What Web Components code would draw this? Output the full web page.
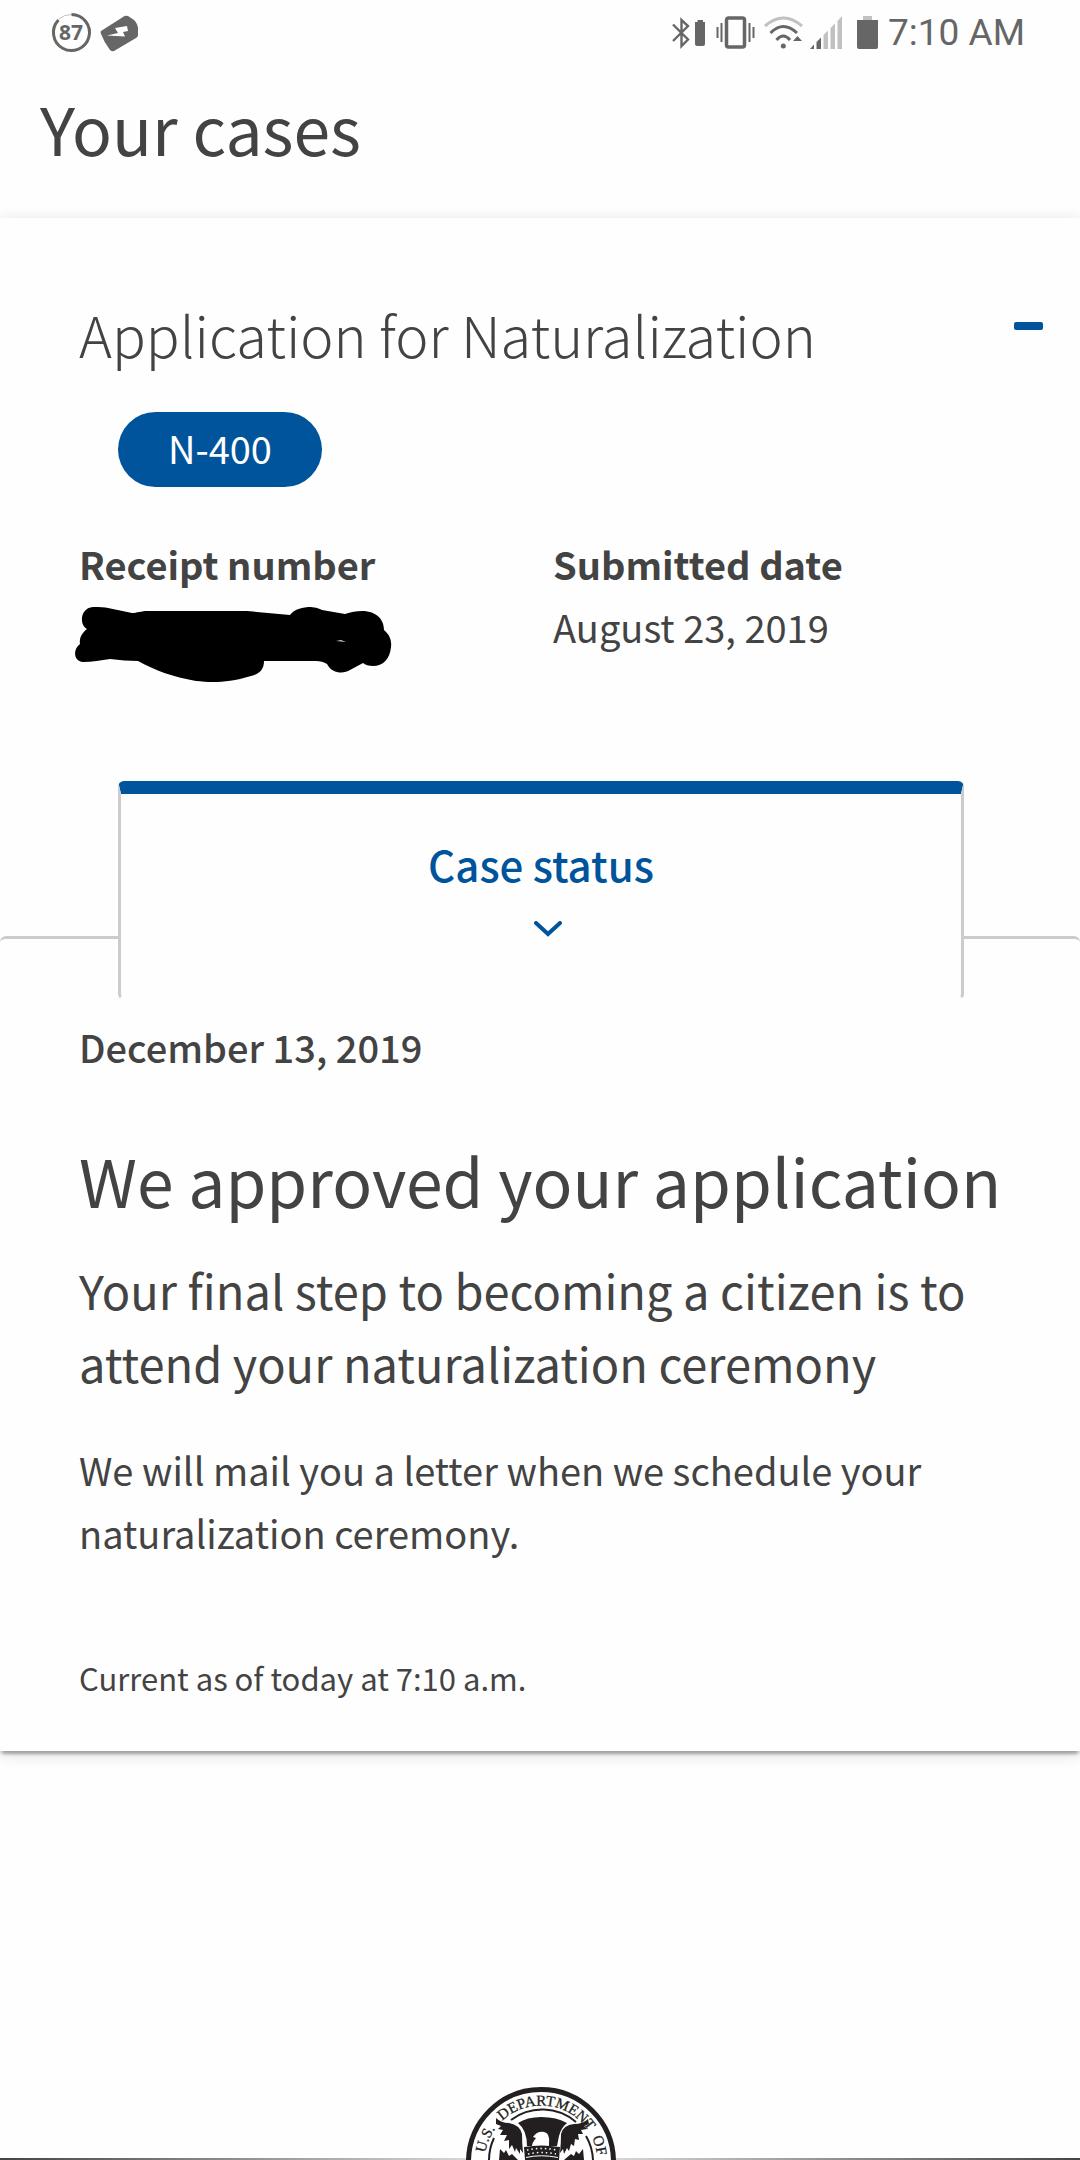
<!DOCTYPE html>
<html lang="en">
<head>
<meta charset="utf-8">
<meta name="viewport" content="width=device-width, initial-scale=1">
<title>Your cases</title>
<style>
    body {
        display: flex;
        flex-direction: column;
        min-height: 100vh;
        margin: 0;
        background: #fefefe;
        color: #434343;
        font-family: "Noto Sans CJK SC", "Noto Sans", sans-serif;
        font-size: 38px;
        line-height: 63px;
        --blue: #00549b;
        --line: #ccc;
        --gutter: 79px;
    }
</style>
</head>
<body>
<status-bar time="7:10 AM" battery="87"></status-bar>
<page-header>Your cases</page-header>
<main>
    <case-card>
        <span slot="title">Application for Naturalization</span>
        <form-badge slot="badge">N-400</form-badge>
        <case-field slot="field" label="Receipt number"><redacted-value></redacted-value></case-field>
        <case-field slot="field" label="Submitted date">August 23, 2019</case-field>
        <case-status>
            <span slot="date">December 13, 2019</span>
            <span slot="heading">We approved your application</span>
            <span slot="subheading">Your final step to becoming a citizen is to attend your naturalization ceremony</span>
            <span slot="body">We will mail you a letter when we schedule your naturalization ceremony.</span>
            <span slot="updated">Current as of today at 7:10 a.m.</span>
        </case-status>
    </case-card>
</main>
<page-footer></page-footer>

<script>
/**
 * Attach an open shadow root holding the given markup.
 */
function render(host, html) {
    const template = document.createElement('template');
    template.innerHTML = html;
    host.attachShadow({ mode: 'open' });
    host.shadowRoot.appendChild(template.content.cloneNode(true));
}

/**
 * Phone status bar: notifications on the left, radios and clock on the right.
 */
class StatusBar extends HTMLElement {
    constructor() {
        super();
        render(this, `
<style>
    :host {
        display: flex;
        justify-content: space-between;
        align-items: center;
        height: 64px;
        padding: 0 55px 0 52px;
        color: #666;
        font: 37px/44px Roboto, sans-serif;
    }
    div {
        display: flex;
        align-items: center;
        gap: 9px;
    }
    time {
        padding-top: 2px;
    }
    svg {
        display: block;
        overflow: visible;
        fill: currentColor;
    }
    .line {
        fill: none;
        stroke: currentColor;
    }
    .dim {
        opacity: .4;
    }
    text {
        font: 700 21px "Open Sans", sans-serif;
    }
</style>
<div>
    <svg width="39" height="39" viewBox="0 0 39 39">
        <path class="line dim" stroke-width="1" d="M7 6A18 18 0 0 1 19.5 1.5"/>
        <path class="line" stroke-width="3" d="M19.5 1.5A18 18 0 1 1 6.5 7"/>
        <text x="19" y="27" text-anchor="middle"></text>
    </svg>
    <svg width="39" height="39" viewBox="0 0 39 39">
        <path d="M1 18L23 4Q25 2 28 3L34 7Q38 11 38 16V22Q38 24 36 25L14 38Q12 39 10 37Q4 29 1 21Q0 19 1 18Z"/>
        <path fill="#fff" d="M15 15L27 13L28 18L23 19L25 23.5L7 22.5L18 20Z"/>
    </svg>
</div>
<div>
    <svg width="35" height="33" viewBox="0 0 35 33">
        <path class="line" stroke-width="2.4" d="M1 8.5L16 23.5L9.5 30V4L16 10L1 25"/>
        <path d="M25.5 4H31V6H33V28Q33 30 31 30H25Q23 30 23 28V6H25.5Z"/>
    </svg>
    <svg width="39" height="33" viewBox="0 0 39 33">
        <rect class="line" x="10.5" y="2" width="18" height="29" rx="2" stroke-width="3.5"/>
        <path class="line" stroke-width="2" d="M1.5 11V22M5.5 7V26M33.5 7V26M37.5 11V22"/>
    </svg>
    <svg width="37" height="33" viewBox="0 0 37 33">
        <g class="line" stroke-width="3">
            <path d="M12.5 24Q19.3 16 26 24"/>
            <path d="M6.5 17Q19.3 4 33 17"/>
            <path class="dim" d="M1 10Q19.3 -6 38 10"/>
        </g>
        <circle cx="19.3" cy="30" r="2.5"/>
        <path d="M29 25L33.5 20L38 25Z"/>
    </svg>
    <svg width="38" height="33" viewBox="0 0 38 33">
        <path d="M0 33L4 28.5V33ZM6.5 26L11 21.5V33H6.5Z"/>
        <path class="dim" d="M13.5 19L18 14.5V33H13.5ZM20.5 12L25 7.5V33H20.5ZM27.5 5L32 0V33H27.5Z"/>
    </svg>
    <svg width="22" height="33" viewBox="0 0 22 33">
        <path class="dim" d="M6 0H15V4H6Z"/>
        <path d="M0 4H21V31Q21 33 19 33H2Q0 33 0 31Z"/>
    </svg>
    <time></time>
</div>
`);
    }

    connectedCallback() {
        this.shadowRoot.querySelector('time').textContent = this.getAttribute('time');
        this.shadowRoot.querySelector('text').textContent = this.getAttribute('battery');
    }
}

class PageHeader extends HTMLElement {
    constructor() {
        super();
        render(this, `
<style>
    :host {
        display: block;
        padding: 15px 40px 43px;
    }
    h1 {
        margin: 0;
        font-size: 66px;
        font-weight: 400;
        line-height: 96px;
    }
</style>
<h1><slot></slot></h1>
`);
    }
}

/**
 * Card for one filed form, can be collapsed with the button at its corner.
 */
class CaseCard extends HTMLElement {
    constructor() {
        super();
        render(this, `
<style>
    :host {
        display: block;
        padding-top: 80px;
        background: #fefefe;
        box-shadow: 0 6px 3px -3px rgba(0,0,0,.2), 0 3px 3px 0 rgba(0,0,0,.14), 0 3px 15px 0 rgba(0,0,0,.14);
    }
    header {
        display: flex;
        justify-content: space-between;
        align-items: flex-start;
        padding: 0 22px 0 var(--gutter);
    }
    h2 {
        margin: 0;
        font-size: 56px;
        font-weight: 300;
        line-height: 72px;
    }
    button {
        display: flex;
        align-items: center;
        height: 56px;
        padding: 0 15px;
        border: 0;
        background: none;
    }
    button span {
        width: 29px;
        height: 8px;
        border-radius: 2px;
        background: var(--blue);
    }
    .badge {
        display: flex;
        margin: 42px 118px 45px;
    }
    .fields {
        display: grid;
        grid-template-columns: 1fr 1fr;
        column-gap: 26px;
        margin: 0 var(--gutter) 99px;
    }
    [hidden] {
        display: none;
    }
</style>
<header>
    <h2><slot name="title"></slot></h2>
    <button type="button" aria-label="Collapse" aria-expanded="true"><span></span></button>
</header>
<div class="badge"><slot name="badge"></slot></div>
<div class="fields"><slot name="field"></slot></div>
<section><slot></slot></section>
`);
    }

    connectedCallback() {
        this.shadowRoot.querySelector('button').addEventListener('click', (ev) => {
            const section = this.shadowRoot.querySelector('section');
            section.hidden = !section.hidden;
            ev.currentTarget.setAttribute('aria-expanded', String(!section.hidden));
        });
    }
}

class FormBadge extends HTMLElement {
    constructor() {
        super();
        render(this, `
<style>
    :host {
        display: block;
        padding: 0 50px 3px;
        border-radius: 38px;
        background: var(--blue);
        color: #fff;
        line-height: 72px;
    }
</style>
<slot></slot>
`);
    }
}

/**
 * Label with its value below.
 */
class CaseField extends HTMLElement {
    constructor() {
        super();
        render(this, `
<style>
    :host {
        display: block;
    }
    dl, dd {
        margin: 0;
    }
    dt {
        font-weight: 700;
    }
</style>
<dl>
    <dt></dt>
    <dd><slot></slot></dd>
</dl>
`);
    }

    connectedCallback() {
        this.shadowRoot.querySelector('dt').textContent = this.getAttribute('label');
    }
}

/**
 * Scribble that stands in for a hidden value.
 */
class RedactedValue extends HTMLElement {
    constructor() {
        super();
        render(this, `
<style>
    :host {
        display: block;
        margin: 12px 0 0 -4px;
    }
    svg {
        display: block;
    }
</style>
<svg width="317" height="75" viewBox="0 0 317 75" role="img" aria-label="Hidden">
    <path d="M12 22C4 18 5 1 18 0C25 0 30 0 33 1L57 6C62 6 66 4 73 4H172L215 8C219 3 224 1 233 0C240 0 243 1 247 3L270 7C276 5 281 4 287 4C302 4 309 13 309 23C314 27 317 33 316 40C315 52 308 59 298 59C294 59 290 58 288 56L275 63C269 67 257 67 252 57C249 55 245 54 241 54H189C189 63 184 67 176 69C150 77 134 75 121 74C98 70 79 63 63 54C54 54 45 53 35 52C26 53 17 55 8 55C-2 54 -2 42 5 37C4 31 7 26 12 22Z"/>
    <path fill="#ccc" d="M261 34L266 33L271 35Z"/>
</svg>
`);
    }
}

/**
 * Status tab that overlaps the top line of its panel.
 */
class CaseStatus extends HTMLElement {
    constructor() {
        super();
        render(this, `
<style>
    :host {
        display: block;
    }
    h3, h4, p {
        margin: 0;
    }
    .tab {
        position: relative;
        display: block;
        box-sizing: border-box;
        width: calc(100% - 234px);
        margin: 0 116px 0 118px;
        padding: 38px 0 60px;
        border: 3px solid var(--line);
        border-top: 13px solid var(--blue);
        border-bottom-color: #fefefe;
        border-radius: 6px;
        background: #fefefe;
        color: var(--blue);
        font: inherit;
        font-size: 42px;
        font-weight: 500;
        text-align: center;
    }
    .tab svg {
        display: block;
        margin: 26px auto 0;
        padding-left: 14px;
    }
    .panel {
        margin-top: -64px;
        padding: 76px 70px 46px var(--gutter);
        border-top: 3px solid var(--line);
        border-radius: 6px;
    }
    .date {
        font-weight: 500;
    }
    h3 {
        margin-top: 53px;
        font-size: 66px;
        font-weight: 400;
        line-height: 96px;
    }
    h4 {
        margin-top: 26px;
        font-size: 47px;
        font-weight: 400;
        line-height: 73px;
    }
    .body {
        margin-top: 39px;
    }
    .updated {
        margin-top: 87px;
        font-size: 31px;
        line-height: 54px;
    }
</style>
<button class="tab" type="button" aria-controls="panel">
    Case status
    <svg width="28" height="16" viewBox="0 0 28 16" fill="none" stroke="currentColor" stroke-width="4" stroke-linecap="round">
        <path d="M2 2L14 13L26 2"/>
    </svg>
</button>
<div class="panel" id="panel">
    <p class="date"><slot name="date"></slot></p>
    <h3><slot name="heading"></slot></h3>
    <h4><slot name="subheading"></slot></h4>
    <p class="body"><slot name="body"></slot></p>
    <p class="updated"><slot name="updated"></slot></p>
</div>
`);
    }
}

/**
 * Footer with the top of the department seal.
 */
class PageFooter extends HTMLElement {
    constructor() {
        super();
        render(this, `
<style>
    :host {
        display: flex;
        justify-content: center;
        margin-top: auto;
        padding-left: 2px;
        background: linear-gradient(90deg, #444, #ddd 45%, #ddd 55%, #444) bottom / 100% 2px no-repeat;
    }
    svg {
        display: block;
    }
    text {
        font: 15px "Liberation Serif", serif;
        stroke: #231f20;
        stroke-width: .3px;
    }
</style>
<svg width="150" height="73" viewBox="0 0 150 73" fill="#231f20">
    <defs>
        <path id="ring" d="M18.5 75A56.5 56.5 0 0 1 131.5 75"/>
    </defs>
    <circle cx="75" cy="75" r="72.5" fill="#fff" stroke="#231f20" stroke-width="5"/>
    <text><textPath href="#ring" startOffset="9">U.S.</textPath></text>
    <text><textPath href="#ring" startOffset="46">DEPARTMENT</textPath></text>
    <text><textPath href="#ring" startOffset="152">OF</textPath></text>
    <path fill="none" stroke="#231f20" stroke-width="2" d="M45 33A52 52 0 0 1 110 35M23 73A52 52 0 0 1 28 51M120 49A52 52 0 0 1 127 73"/>
    <path d="M52 36Q61 30 75 30Q91 30 101 36Q95 41 93 49L91 59H83V56Q84 46 78 45Q71 44 67 50L70 51Q66 56 66 59H61Q61 43 52 36Z"/>
    <path d="M30 31Q35 36 43 36Q54 38 56 47Q56 56 57 66L54 62L54 67L50 61L49 65L46 58L43 62L43 53L38 54L41 48L34 48L37 43L32 42L35 39L30 37Z"/>
    <path d="M122 32Q117 37 108 37Q97 38 95 47Q95 56 94 66L97 62L98 67L101 61L103 64L105 57L108 59L109 52L113 53L112 47L117 47L115 43L121 42L118 39L123 37Z"/>
    <path d="M58 60Q75 57 94 60L93 73H59Z"/>
    <path fill="none" stroke="#fff" stroke-width="1.5" stroke-dasharray="1.5 3" d="M61 63Q75 60 91 63M62 67Q75 64 90 67"/>
    <path fill="none" stroke="#fff" d="M60 70.5Q75 67 92 70.5"/>
    <path d="M33 73L34 62L38 66L40 63L43 69L46 67L52 73ZM98 73L105 67L108 69L110 64L113 67L117 62L118 73Z"/>
</svg>
`);
    }
}

window.customElements.define('status-bar', StatusBar);
window.customElements.define('page-header', PageHeader);
window.customElements.define('case-card', CaseCard);
window.customElements.define('form-badge', FormBadge);
window.customElements.define('case-field', CaseField);
window.customElements.define('redacted-value', RedactedValue);
window.customElements.define('case-status', CaseStatus);
window.customElements.define('page-footer', PageFooter);
</script>
</body>
</html>
